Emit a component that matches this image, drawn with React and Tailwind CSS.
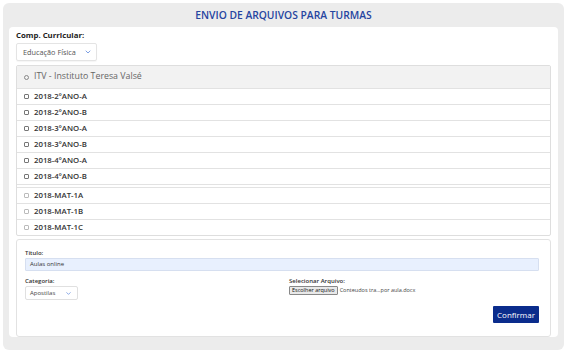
import { ChevronDown } from "lucide-react";

const grupoA = ["2018-2ºANO-A", "2018-2ºANO-B", "2018-3ºANO-A", "2018-3ºANO-B", "2018-4ºANO-A", "2018-4ºANO-B"];
const grupoB = ["2018-MAT-1A", "2018-MAT-1B", "2018-MAT-1C"];

function Row({ label, light }) {
  return (
    <div className="h-[16px] flex items-center border-t border-[#e2e2e2] pl-[7px]">
      <span
        className={
          "w-[5px] h-[5px] rounded-[1px] border mr-[5px] " +
          (light ? "border-[#bbb]" : "border-[#777]")
        }
      />
      <span className="text-[7.8px] font-semibold text-[#333]">{label}</span>
    </div>
  );
}

export default function App() {
  return (
    <div
      className="w-[567px] h-[353px] bg-white p-[3px]"
      style={{ fontFamily: "'Open Sans', 'Noto Sans', sans-serif" }}
    >
      <div className="h-[347px] bg-[#ececec] rounded-[6px] flex flex-col pb-[13px]">
        <div className="h-[24px] flex items-center justify-center pt-[2px] text-[10.3px] font-semibold text-[#2645a0]">
          ENVIO DE ARQUIVOS PARA TURMAS
        </div>
        <div className="flex-1 mx-[6px] bg-white rounded-[4px] px-[7px] pt-[3px] flex flex-col">
          <div className="text-[7.8px] font-bold text-[#222] leading-[11px]">Comp. Curricular:</div>
          <div className="mt-[2px] w-[81px] h-[18px] border border-[#e4e4e4] rounded-[2px] flex items-center pl-[6px] gap-[8px] shadow-[0_1px_1px_rgba(0,0,0,0.04)]">
            <span className="text-[7.3px] text-[#555]">Educação Física</span>
            <ChevronDown size={8} strokeWidth={2} className="text-[#3b6fd6]" />
          </div>

          <div className="mt-[4px] border border-[#dedede] rounded-[2px]">
            <div className="h-[22px] bg-[#f2f2f2] flex items-center pl-[7px]">
              <span className="w-[5px] h-[5px] rounded-full border border-[#888] mr-[5px]" />
              <span className="text-[8.8px] text-[#666]">ITV - Instituto Teresa Valsé</span>
            </div>
            {grupoA.map((t) => (
              <Row key={t} label={t} />
            ))}
            <div className="h-[3px] border-t border-[#e2e2e2]" />
            {grupoB.map((t) => (
              <Row key={t} label={t} light />
            ))}
          </div>

          <div className="mt-[3px] flex-1 border border-[#e2e2e2] rounded-[3px] pl-[8px] pr-[11px] pt-[9px] flex flex-col">
            <div className="text-[6px] font-semibold text-[#333] leading-[8px]">Título:</div>
            <div className="mt-[1px] h-[13px] bg-[#e8f0fe] border border-[#d6dff0] rounded-[1px] flex items-center pl-[4px] text-[6px] text-[#333]">
              Aulas online
            </div>
            <div className="mt-[6px] flex">
              <div className="w-[264px]">
                <div className="text-[6px] font-semibold text-[#333] leading-[8px]">Categoria:</div>
                <div className="mt-[1px] w-[53px] h-[14px] border border-[#e0e0e0] rounded-[2px] flex items-center pl-[4px] gap-[10px]">
                  <span className="text-[6px] text-[#444]">Apostilas</span>
                  <ChevronDown size={7} strokeWidth={2} className="text-[#3b6fd6]" />
                </div>
              </div>
              <div>
                <div className="text-[6px] font-semibold text-[#333] leading-[8px]">Selecionar Arquivo:</div>
                <div className="mt-[1px] flex items-center gap-[2px]">
                  <span className="h-[9px] px-[2px] bg-[#e9e9e9] border border-[#888] rounded-[1px] text-[5.5px] text-[#111] flex items-center">
                    Escolher arquivo
                  </span>
                  <span className="text-[5.5px] text-[#444]">Conteudos tra...por aula.docx</span>
                </div>
              </div>
            </div>
            <div className="mt-[6px] flex justify-end">
              <button className="w-[46px] h-[17px] bg-[#0a2c8c] text-white text-[8px] rounded-[1px]">
                Confirmar
              </button>
            </div>
          </div>
        </div>
      </div>
    </div>
  );
}
